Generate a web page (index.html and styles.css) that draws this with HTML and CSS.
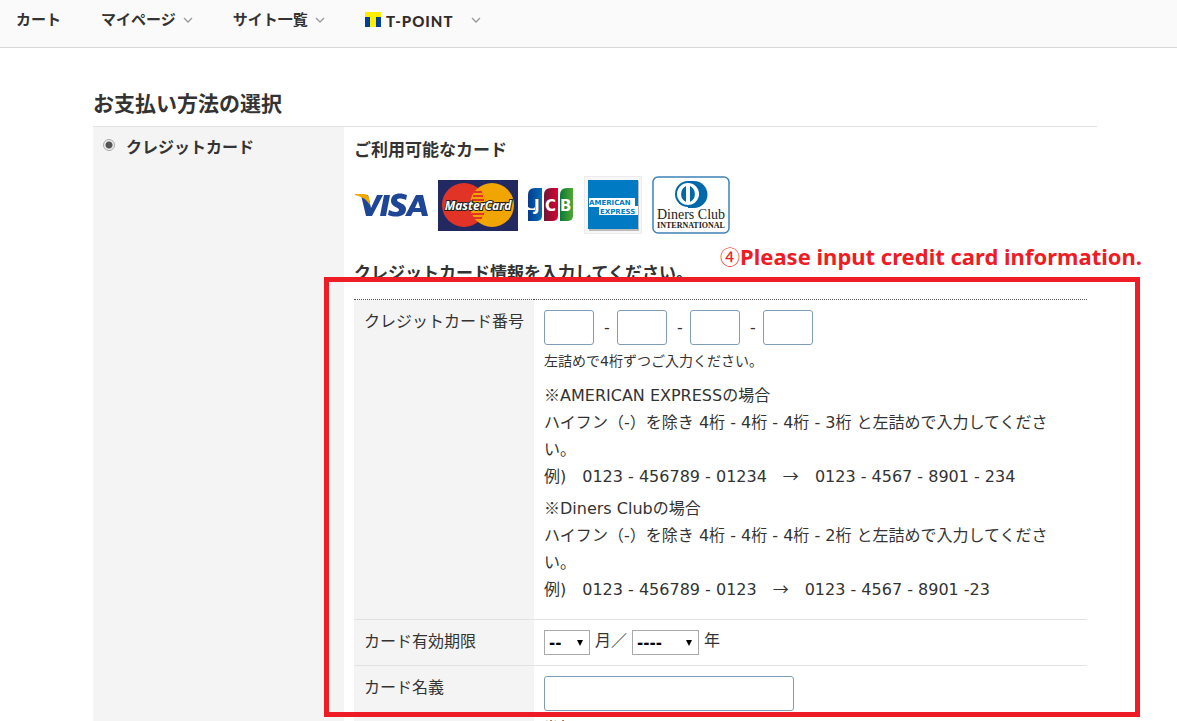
FILE: index.html
```html
<!DOCTYPE html>
<html lang="ja">
<head>
  <meta charset="utf-8">
  <title>お支払い方法の選択</title>
  <link rel="stylesheet" href="styles.css">
</head>
<body>
  <header class="site-header">
    <nav class="nav">
      <a href="#" class="nav-cart">カート</a>
      <a href="#" class="nav-mypage">マイページ
        <svg class="chevron" width="10" height="6" viewBox="0 0 10 6"><path d="M1 1l4 4 4-4" fill="none" stroke="#999" stroke-width="1.3"/></svg>
      </a>
      <a href="#" class="nav-sites">サイト一覧
        <svg class="chevron" width="10" height="6" viewBox="0 0 10 6"><path d="M1 1l4 4 4-4" fill="none" stroke="#999" stroke-width="1.3"/></svg>
      </a>
      <a href="#" class="nav-point">
        <svg width="90" height="18" viewBox="0 0 90 18" role="img" aria-label="T-POINT">
          <rect x="0" y="1" width="16" height="5" fill="#ffee00"/>
          <rect x="0" y="6" width="16" height="10" fill="#00409c"/>
          <rect x="5" y="6" width="6" height="10" fill="#ffee00"/>
          <text x="21" y="16" font-family="Lato, sans-serif" font-size="15" font-weight="900" fill="#332b29" letter-spacing="1">T-POINT</text>
        </svg>
        <svg class="chevron" width="10" height="6" viewBox="0 0 10 6"><path d="M1 1l4 4 4-4" fill="none" stroke="#999" stroke-width="1.3"/></svg>
      </a>
    </nav>
  </header>

  <main class="payment">
    <h1>お支払い方法の選択</h1>
    <div class="method">
      <div class="method-name">
        <input type="radio" id="pay-card" name="payment" checked>
        <label for="pay-card">クレジットカード</label>
      </div>

      <div class="method-body">
        <h2>ご利用可能なカード</h2>
        <div class="cards">
          <svg class="visa" width="74" height="26" viewBox="0 0 74 26" role="img" aria-label="VISA">
            <path d="M7 3h7l3 13 6-13h6L18 24h-6z" fill="#1f4595"/>
            <path d="M1 2h9q4 0 5 4l1 7Q11 5 1 3z" fill="#f2a900"/>
            <path d="M30 3h6l-4 21h-6z" fill="#1f4595"/>
            <path d="M53 3l-1 5c-4-2-9-2-9 0 0 3 9 3 9 9 0 8-10 9-18 6l1-5c6 3 10 2 10 0 0-3-8-3-8-9 0-8 9-9 16-6z" fill="#1f4595"/>
            <path fill-rule="evenodd" d="M62 3h7l5 21h-6l-1-4h-8l-2 4h-6zm2 6l-3 7h5z" fill="#1f4595"/>
          </svg>
          <svg class="master" width="80" height="51" viewBox="0 0 80 51" role="img" aria-label="MasterCard">
            <rect width="80" height="51" fill="#222860"/>
            <circle cx="54" cy="25" r="22" fill="#f0a500"/>
            <circle cx="26" cy="25" r="22" fill="#e23426"/>
            <path d="M40 8a22 22 0 0 1 0 34a22 22 0 0 1 0-34z" fill="#f0a500"/>
            <path d="M36 12h8M35 16h10M34 20h12M34 34h12M35 38h9" stroke="#e23426" stroke-width="2"/>
            <g font-family="Open Sans, sans-serif" font-size="12" font-weight="700" font-style="italic">
              <text x="40" y="30" text-anchor="middle" fill="#fff" stroke="#222" stroke-width="2" paint-order="stroke">MasterCard</text>
            </g>
          </svg>
          <svg class="jcb" width="46" height="34" viewBox="0 0 46 34" role="img" aria-label="JCB">
            <defs>
              <linearGradient id="jcb-blue"><stop offset="0" stop-color="#073b8e"/><stop offset="1" stop-color="#006db5"/></linearGradient>
              <linearGradient id="jcb-red"><stop offset="0" stop-color="#6d1739"/><stop offset="1" stop-color="#df0030"/></linearGradient>
              <linearGradient id="jcb-green"><stop offset="0" stop-color="#0a7938"/><stop offset="1" stop-color="#50a832"/></linearGradient>
            </defs>
            <path d="M7 0h7v28q0 5-6 5H0V7q0-7 7-7z" fill="url(#jcb-blue)"/>
            <path d="M23 0h7v28q0 5-6 5h-8V7q0-7 7-7z" fill="url(#jcb-red)"/>
            <path d="M39 0h6v28q0 5-6 5h-7V7q0-7 7-7z" fill="url(#jcb-green)"/>
            <path d="M0 19q5 3 7 0v3H0z" fill="#fff"/>
            <text y="23" font-family="DejaVu Sans, sans-serif" font-size="15" font-weight="700" fill="#fff"><tspan x="6">J</tspan><tspan x="17">C</tspan><tspan x="32">B</tspan></text>
          </svg>
          <svg class="amex" width="58" height="58" viewBox="0 0 58 58" role="img" aria-label="AMERICAN EXPRESS">
            <rect x=".5" y=".5" width="57" height="57" fill="#f7f7f7" stroke="#ddd" stroke-dasharray="1 1"/>
            <rect x="5" y="5" width="50" height="50" fill="#bbb"/>
            <rect x="4" y="4" width="50" height="49" fill="#007bc3"/>
            <path d="M5 22h46v8h3v9H15v-8H5z" fill="#fff"/>
            <text x="5" y="29" font-family="DejaVu Sans, sans-serif" font-size="7" font-weight="700" fill="#007bc3">AMERICAN</text>
            <text x="16" y="38" font-family="DejaVu Sans, sans-serif" font-size="7" font-weight="700" fill="#007bc3">EXPRESS</text>
          </svg>
          <svg class="diners" width="78" height="58" viewBox="0 0 78 58" role="img" aria-label="Diners Club INTERNATIONAL">
            <rect x="1" y="1" width="76" height="56" rx="5" fill="#fff" stroke="#3e83b5" stroke-width="1.5"/>
            <path d="M36 5h6a13 13 0 0 1 0 27h-6z" fill="#0069aa"/>
            <circle cx="36" cy="18" r="13" fill="#0069aa"/>
            <circle cx="36" cy="18" r="11" fill="#fff"/>
            <path d="M34 10a9 9 0 0 0 0 16zM38 10a9 9 0 0 1 0 16z" fill="#0069aa"/>
            <text x="39" y="43" text-anchor="middle" font-family="Liberation Serif, serif" font-size="14" fill="#222">Diners Club</text>
            <text x="39" y="52" text-anchor="middle" font-family="Liberation Serif, serif" font-size="8" font-weight="700" fill="#222">INTERNATIONAL</text>
          </svg>
        </div>

        <h2>クレジットカード情報を入力してください。</h2>
        <div class="card-form">
          <table>
            <tr class="row-number">
              <th scope="row"><label for="number1">クレジットカード番号</label></th>
              <td>
                <div class="number">
                  <input type="text" id="number1" maxlength="4" aria-label="1-4">
                  <span>-</span>
                  <input type="text" maxlength="4" aria-label="5-8">
                  <span>-</span>
                  <input type="text" maxlength="4" aria-label="9-12">
                  <span>-</span>
                  <input type="text" maxlength="4" aria-label="13-16">
                </div>
                <p class="note">左詰めで4桁ずつご入力ください。</p>
                <p><span class="sym">※</span>AMERICAN EXPRESSの場合<br>
                ハイフン（-）を除き 4桁 - 4桁 - 4桁 - 3桁 と左詰めで入力してください。<br>
                例)　0123 - 456789 - 01234　<span class="sym">→</span>　0123 - 4567 - 8901 - 234</p>
                <p><span class="sym">※</span>Diners Clubの場合<br>
                ハイフン（-）を除き 4桁 - 4桁 - 4桁 - 2桁 と左詰めで入力してください。<br>
                例)　0123 - 456789 - 0123　<span class="sym">→</span>　0123 - 4567 - 8901 -23</p>
              </td>
            </tr>
            <tr>
              <th scope="row"><label for="month">カード有効期限</label></th>
              <td>
                <div class="expiry">
                  <select id="month" class="month"><option>--</option></select>
                  <label for="month">月／</label>
                  <select id="year" class="year"><option>----</option></select>
                  <label for="year">年</label>
                </div>
              </td>
            </tr>
            <tr>
              <th scope="row"><label for="holder">カード名義</label></th>
              <td>
                <input type="text" id="holder" class="holder">
                <p class="note">半角</p>
              </td>
            </tr>
          </table>
          <div class="callout-box"></div>
          <div class="callout-text"><span class="sym">④</span>Please input credit card information.</div>
        </div>
      </div>
    </div>
  </main>
</body>
</html>
```

FILE: styles.css
```css
* {
  box-sizing: border-box;
}

body {
  margin: 0;
  color: #333;
  background: #fff;
  font-family: "DejaVu Sans", "Noto Sans CJK JP", sans-serif;
  font-size: 16px;
  line-height: 27px;
}

h1, h2, p {
  margin: 0;
}

.site-header {
  background: #fafafa;
  border-bottom: 1px solid #d8d8d8;
}

.nav {
  display: flex;
  height: 47px;
  padding: 6px 16px;
  gap: 40px;
}

.nav a {
  display: flex;
  align-items: center;
  gap: 7px;
  height: 28px;
  color: #333;
  font-size: 15px;
  font-weight: bold;
  text-decoration: none;
}

.nav .nav-point {
  gap: 16px;
}

.payment {
  padding: 40px 80px 0 93px;
}

h1 {
  font-size: 21px;
  line-height: 32px;
  padding-bottom: 6px;
}

.method {
  display: flex;
  border-top: 1px solid #e2e2e2;
}

.method-name {
  display: flex;
  align-items: flex-start;
  flex: 0 0 251px;
  gap: 11px;
  padding: 7px 10px;
  background: #f4f4f4;
  font-weight: bold;
}

.method-name input {
  appearance: none;
  width: 12px;
  height: 12px;
  margin: 5px 0 0;
  border: 1px solid #aaa;
  border-radius: 50%;
  background: radial-gradient(circle, #555 0 3px, #eee 4px);
}

.method-body {
  flex: 1;
  padding: 10px;
}

h2 {
  font-size: 17px;
  line-height: 26px;
}

.cards {
  display: flex;
  align-items: center;
  gap: 10px;
  padding: 13px 0 26px;
}

.card-form {
  position: relative;
  margin-top: 13px;
}

table {
  width: 100%;
  border-collapse: collapse;
  border-top: 1px dotted #555;
}

th, td {
  padding: 10px;
  text-align: left;
  vertical-align: top;
  border-bottom: 1px solid #e2e2e2;
}

th {
  width: 180px;
  padding-top: 8px;
  background: #f4f4f4;
  font-weight: normal;
  white-space: nowrap;
}

td p {
  margin-bottom: 5px;
}

td .note {
  padding-top: 1px;
  font-size: 14px;
  line-height: 31px;
}

.row-number td {
  padding-bottom: 11px;
}

.sym {
  font-family: "Noto Sans CJK JP", sans-serif;
  line-height: 1;
}

input[type="text"] {
  display: block;
  width: 50px;
  height: 35px;
  padding: 4px;
  border: 1px solid #7f9db9;
  border-radius: 3px;
  background: #fff;
  font-size: 16px;
}

.number {
  display: flex;
  align-items: center;
}

.number span {
  width: 23px;
  padding-left: 10px;
}

input.holder {
  width: 250px;
}

.expiry {
  display: flex;
  align-items: center;
  gap: 5px;
  height: 25px;
}

.expiry label {
  line-height: 24px;
  padding-bottom: 3px;
}

select {
  appearance: none;
  height: 25px;
  padding: 0 4px;
  border: 1px solid #a9a9a9;
  border-radius: 0;
  color: #000;
  background: #fff url("data:image/svg+xml,%3Csvg xmlns='http://www.w3.org/2000/svg' width='6' height='6'%3E%3Cpath d='M0 0h6L3 6z'/%3E%3C/svg%3E") no-repeat right 6px center;
  font-family: "DejaVu Sans", sans-serif;
  font-size: 15px;
  font-weight: bold;
}

.month {
  width: 46px;
}

.year {
  width: 67px;
}

/* red marker drawn over the form */
.callout-box {
  position: absolute;
  top: -22px;
  right: -53px;
  bottom: 42px;
  left: -30px;
  border: 5px solid #ee1c25;
  pointer-events: none;
}

.callout-text {
  position: absolute;
  top: -58px;
  right: -55px;
  color: #ee1c25;
  font-family: "Noto Sans", "Noto Sans CJK JP", sans-serif;
  font-size: 22px;
  font-weight: bold;
  line-height: 30px;
  white-space: nowrap;
}

.callout-text .sym {
  font-size: 20px;
  font-weight: normal;
}
```
